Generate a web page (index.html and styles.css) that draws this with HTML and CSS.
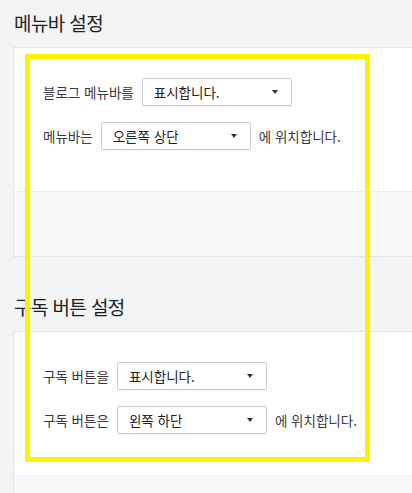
FILE: index.html
```html
<!DOCTYPE html>
<html lang="ko">
<head>
<meta charset="utf-8">
<title>설정</title>
<link rel="stylesheet" href="styles.css">
</head>
<body>
<div class="page">
  <section class="section">
    <h2 class="section-title">메뉴바 설정</h2>
    <div class="card">
      <div class="card-body">
        <div class="row">
          <span class="label">블로그 메뉴바를</span>
          <div class="select"><span class="select-text">표시합니다.</span><span class="caret"></span></div>
        </div>
        <div class="row">
          <span class="label">메뉴바는</span>
          <div class="select"><span class="select-text">오른쪽 상단</span><span class="caret"></span></div>
          <span class="label">에 위치합니다.</span>
        </div>
      </div>
      <div class="card-footer"></div>
    </div>
  </section>
  <section class="section second">
    <h2 class="section-title">구독 버튼 설정</h2>
    <div class="card">
      <div class="card-body">
        <div class="row">
          <span class="label">구독 버튼을</span>
          <div class="select"><span class="select-text">표시합니다.</span><span class="caret"></span></div>
        </div>
        <div class="row">
          <span class="label">구독 버튼은</span>
          <div class="select"><span class="select-text">왼쪽 하단</span><span class="caret"></span></div>
          <span class="label">에 위치합니다.</span>
        </div>
      </div>
      <div class="card-footer"></div>
    </div>
  </section>
  <div class="highlight"></div>
</div>
</body>
</html>
```
FILE: styles.css
```css
html, body {
  margin: 0;
  padding: 0;
  background: #f3f4f6;
  overflow: hidden;
}
body {
  font-family: "Noto Sans CJK KR", "Noto Sans", sans-serif;
  color: #333;
}
.page {
  position: relative;
  width: 440px;
  padding: 10px 0 0 13px;
  box-sizing: border-box;
}
.section-title {
  margin: 0 0 11px 1px;
  font-size: 19px;
  line-height: 26px;
  font-weight: 400;
  letter-spacing: -0.6px;
  color: #1e1e1e;
}
.second {
  margin-top: 37px;
}
.card {
  background: #fff;
  border: 1px solid #e1e4e8;
}
.card-body {
  padding: 30px 0 41px 29px;
  display: flex;
  flex-direction: column;
  gap: 16px;
}
.row {
  display: flex;
  align-items: center;
  gap: 8px;
  height: 28px;
}
.label {
  font-size: 13.5px;
  letter-spacing: 0;
  color: #3a3a3a;
  white-space: nowrap;
}
.select {
  width: 150px;
  height: 28px;
  box-sizing: border-box;
  border: 1px solid #c9ced6;
  border-radius: 2px;
  box-shadow: 0 1px 1px rgba(0, 0, 0, 0.06);
  background: #fff;
  display: flex;
  align-items: center;
  justify-content: space-between;
  padding: 0 13px 0 11px;
}
.select-text {
  font-size: 13.5px;
  letter-spacing: 0;
  color: #222;
}
.caret {
  width: 0;
  height: 0;
  border-left: 3px solid transparent;
  border-right: 3px solid transparent;
  border-top: 4px solid #333;
}
.card-footer {
  height: 64px;
  border-top: 1px solid #eceef1;
  background: #f8f9fa;
}
.highlight {
  position: absolute;
  left: 25px;
  top: 54px;
  width: 345px;
  height: 408px;
  box-sizing: border-box;
  border: 5px solid #fff200;
}
```
